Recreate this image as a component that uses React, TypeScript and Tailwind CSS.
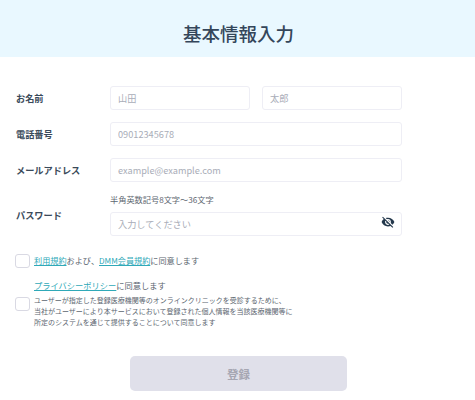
import { MdVisibilityOff } from 'react-icons/md'

const inputCls =
  'h-[24px] rounded-[3px] border border-[#eeeef5] bg-white px-[7px] text-[9.2px] text-[#2f4050] placeholder:text-[#a9adb8] outline-none'

const Label = ({ children }: { children: string }) => (
  <div className="w-[110px] shrink-0 pl-4 text-[9.2px] font-bold leading-[16px] text-[#3a4a5a]">{children}</div>
)

const Check = () => <div className="h-[14px] w-[15px] shrink-0 rounded-[3px] border border-[#d9d9e3] bg-white" />

export default function App() {
  return (
    <div className="h-[400px] w-[475px] overflow-hidden bg-white font-['Noto_Sans_CJK_JP','Noto_Sans',sans-serif]">
      <header className="flex h-[57px] items-center justify-center bg-[#e9f8ff] pl-[2px] pt-[9px]">
        <h1 className="text-[18.5px] font-medium leading-none text-[#34465a]">基本情報入力</h1>
      </header>

      <form className="flex flex-col pt-[29px]">
        <div className="flex items-center">
          <Label>お名前</Label>
          <div className="flex gap-3">
            <input className={`${inputCls} w-[140px]`} placeholder="山田" />
            <input className={`${inputCls} w-[140px]`} placeholder="太郎" />
          </div>
        </div>

        <div className="mt-[12px] flex items-center">
          <Label>電話番号</Label>
          <input className={`${inputCls} w-[292px]`} placeholder="09012345678" />
        </div>

        <div className="mt-[12px] flex items-center">
          <Label>メールアドレス</Label>
          <input className={`${inputCls} w-[292px]`} placeholder="example@example.com" />
        </div>

        <div className="mt-[11px] flex items-center">
          <Label>パスワード</Label>
          <div className="flex w-[292px] flex-col">
            <p className="mb-[4px] text-[8.2px] leading-[12px] text-[#5c6670]">半角英数記号8文字〜36文字</p>
            <div className="relative">
              <input className={`${inputCls} w-full`} placeholder="入力してください" />
              <MdVisibilityOff className="absolute right-[7px] top-[6px] text-[14px] text-[#24384c]" />
            </div>
          </div>
        </div>

        <div className="mt-[18px] flex items-center gap-[4px] pl-[15px]">
          <Check />
          <p className="text-[8.15px] leading-[14px] text-[#5c6670]">
            <span className="text-[#2fa9b8] underline">利用規約</span>および、
            <span className="text-[#2fa9b8] underline">DMM会員規約</span>に同意します
          </p>
        </div>

        <div className="mt-[10px] flex flex-col pl-[34px]">
          <p className="text-[8.25px] leading-[14px] text-[#5c6670]">
            <span className="text-[#2fa9b8] underline">プライバシーポリシー</span>に同意します
          </p>
          <div className="relative mt-[3px] text-[7px] leading-[11px] text-[#5c6670]">
            <div className="absolute left-[-19px] top-[2px]">
              <Check />
            </div>
            <p>ユーザーが指定した登録医療機関等のオンラインクリニックを受診するために、</p>
            <p>当社がユーザーにより本サービスにおいて登録された個人情報を当該医療機関等に</p>
            <p>所定のシステムを通じて提供することについて同意します</p>
          </div>
        </div>

        <button
          type="button"
          className="ml-[130px] mt-[28px] flex h-[35px] w-[217px] items-center justify-center rounded-[5px] bg-[#e0e0ea] pt-[2px] text-[11.5px] font-bold text-[#a6a6b2]"
        >
          登録
        </button>
      </form>
    </div>
  )
}
